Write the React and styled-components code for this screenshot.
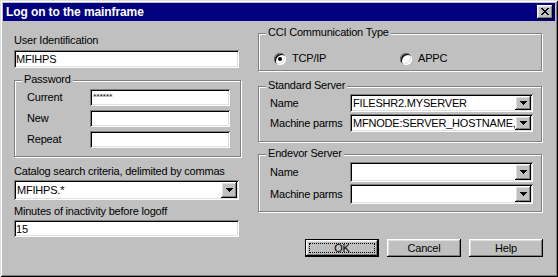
import styled, { createGlobalStyle } from 'styled-components'

const GlobalStyle = createGlobalStyle`
  html, body {
    margin: 0;
    padding: 0;
    background: #c0c0c0;
  }
  body {
    font-family: "Liberation Sans", Arial, sans-serif;
    font-size: 11px;
    letter-spacing: -0.2px;
    color: #000;
  }
  * { box-sizing: border-box; }
`

// raised and sunken bevels, win95 style
const raisedWindow = `
  box-shadow: inset 1px 1px #dfdfdf, inset -1px -1px #000,
    inset 2px 2px #fff, inset -2px -2px #808080;
`
const raisedButton = `
  box-shadow: inset -1px -1px #000, inset 1px 1px #fff,
    inset -2px -2px #808080, inset 2px 2px #dfdfdf;
`
const sunken = `
  box-shadow: inset 1px 1px #808080, inset -1px -1px #fff,
    inset 2px 2px #000, inset -2px -2px #dfdfdf;
`

const Window = styled.div`
  width: 558px;
  height: 277px;
  padding: 3px;
  background: #c0c0c0;
  ${raisedWindow}
`

const TitleBar = styled.div`
  height: 18px;
  background: #000080;
  display: flex;
  align-items: center;
  justify-content: space-between;
  padding: 0 2px 0 3px;
`

const TitleText = styled.span`
  color: #fff;
  font-weight: bold;
  font-size: 12px;
  letter-spacing: -0.1px;
  line-height: 14px;
`

const CloseButton = styled.div`
  width: 16px;
  height: 14px;
  background: #c0c0c0;
  display: flex;
  align-items: center;
  justify-content: center;
  padding: 0 1px 1px 0;
  ${raisedButton}
`

const Body = styled.div`
  display: flex;
  align-items: flex-start;
  gap: 17px;
  padding: 12px 0 0 11px;
`

const Column = styled.div`
  width: ${p => p.$w}px;
  display: flex;
  flex-direction: column;
  margin-top: ${p => p.$mt || 0}px;
`

const Label = styled.div`
  line-height: 13px;
  height: 13px;
  white-space: nowrap;
  margin-top: ${p => p.$mt || 0}px;
`

const Field = styled.div`
  width: ${p => p.$w}px;
  height: ${p => p.$h}px;
  margin-top: ${p => p.$mt || 0}px;
  background: #fff;
  display: flex;
  align-items: center;
  padding: 1px 2px 0 2px;
  line-height: 13px;
  white-space: nowrap;
  overflow: hidden;
  ${sunken}
`

const Stars = styled.span`
  font-family: "DejaVu Sans", sans-serif;
  font-size: 7px;
  line-height: 8px;
  letter-spacing: -0.3px;
  align-self: flex-start;
  margin-top: 3px;
  margin-left: 1px;
`

const Combo = styled.div`
  width: ${p => p.$w}px;
  height: ${p => p.$h}px;
  margin-top: ${p => p.$mt || 0}px;
  background: #fff;
  display: flex;
  align-items: stretch;
  padding: 2px;
  ${sunken}
`

const ComboText = styled.div`
  flex: 1;
  display: flex;
  align-items: center;
  padding: 1px 0 0 1px;
  white-space: nowrap;
  overflow: hidden;
  line-height: 13px;
`

const DropButton = styled.div`
  width: 16px;
  flex: none;
  background: #c0c0c0;
  display: flex;
  align-items: center;
  justify-content: center;
  padding-bottom: 1px;
  ${raisedButton}
`

const Group = styled.div`
  position: relative;
  width: ${p => p.$w}px;
  margin-top: ${p => p.$mt || 0}px;
  padding: ${p => p.$pad};
  border: 1px solid #808080;
  box-shadow: inset 1px 1px #fff, 1px 1px #fff;
`

const Legend = styled.span`
  position: absolute;
  top: -8px;
  left: 7px;
  padding: 0 2px;
  line-height: 13px;
  background: #c0c0c0;
  white-space: nowrap;
`

const Rows = styled.div`
  display: grid;
  grid-template-columns: ${p => p.$label}px auto;
  row-gap: ${p => p.$gap}px;
  align-items: center;
`

const RowLabel = styled.div`
  line-height: 13px;
  white-space: nowrap;
`

const RadioRow = styled.div`
  display: flex;
  align-items: center;
  height: 13px;
`

const RadioOption = styled.label`
  width: ${p => p.$w ? `${p.$w}px` : 'auto'};
  display: flex;
  align-items: center;
  gap: 6px;
  line-height: 13px;
`

const RadioCircle = styled.span`
  width: 12px;
  height: 12px;
  border-radius: 50%;
  background: #fff;
  display: flex;
  align-items: center;
  justify-content: center;
  ${sunken}

  &::after {
    content: '';
    width: 4px;
    height: 4px;
    border-radius: 50%;
    background: ${p => p.$checked ? '#000' : 'transparent'};
  }
`

const ButtonRow = styled.div`
  display: flex;
  justify-content: flex-end;
  gap: 8px;
  margin-top: 27px;
  margin-right: -1px;
`

const Button = styled.div`
  width: 74px;
  height: 18px;
  background: #c0c0c0;
  display: flex;
  align-items: stretch;
  justify-content: center;
  padding: ${p => p.$default ? '3px' : '0'};
  line-height: 13px;
  ${p => p.$default ? 'border: 1px solid #000;' : ''}
  ${raisedButton}
`

const ButtonFace = styled.span`
  flex: 1;
  display: flex;
  align-items: center;
  justify-content: center;
  padding-top: 1px;
  border: 1px dotted ${p => p.$focus ? '#000' : 'transparent'};
`

const Arrow = () => (
  <svg width="7" height="4" viewBox="0 0 7 4" shapeRendering="crispEdges">
    <path d="M0 0h7v1H0zM1 1h5v1H1zM2 2h3v1H2zM3 3h1v1H3z" fill="#000" />
  </svg>
)

const CloseIcon = () => (
  <svg width="8" height="7" viewBox="0 0 8 7" shapeRendering="crispEdges">
    <path
      d="M0 0h2v1H0zM6 0h2v1H6zM1 1h2v1H1zM5 1h2v1H5zM2 2h4v1H2zM3 3h2v1H3zM2 4h4v1H2zM1 5h2v1H1zM5 5h2v1H5zM0 6h2v1H0zM6 6h2v1H6z"
      fill="#000"
    />
  </svg>
)

function ComboBox({ w, h, mt, value }) {
  return (
    <Combo $w={w} $h={h} $mt={mt}>
      <ComboText>{value}</ComboText>
      <DropButton><Arrow /></DropButton>
    </Combo>
  )
}

export default function App() {
  return (
    <>
      <GlobalStyle />
      <Window>
        <TitleBar>
          <TitleText>Log on to the mainframe</TitleText>
          <CloseButton><CloseIcon /></CloseButton>
        </TitleBar>
        <Body>
          <Column $w={227} $mt={1}>
            <Label>User Identification</Label>
            <Field $w={225} $h={18} $mt={3}>MFIHPS</Field>

            <Group $w={227} $mt={12} $pad="8px 0 8px 12px">
              <Legend>Password</Legend>
              <Rows $label={63} $gap={4}>
                <RowLabel>Current</RowLabel>
                <Field $w={140} $h={17}><Stars>******</Stars></Field>
                <RowLabel>New</RowLabel>
                <Field $w={140} $h={17} />
                <RowLabel>Repeat</RowLabel>
                <Field $w={140} $h={17} />
              </Rows>
            </Group>

            <Label $mt={8}>Catalog search criteria, delimited by commas</Label>
            <ComboBox w={225} h={20} mt={2} value="MFIHPS.*" />
            <Label $mt={5}>Minutes of inactivity before logoff</Label>
            <Field $w={225} $h={17} $mt={2}>15</Field>
          </Column>

          <Column $w={284}>
            <Group $w={284} $pad="18px 0 5px 15px">
              <Legend>CCI Communication Type</Legend>
              <RadioRow>
                <RadioOption $w={126}>
                  <RadioCircle $checked />
                  TCP/IP
                </RadioOption>
                <RadioOption>
                  <RadioCircle />
                  APPC
                </RadioOption>
              </RadioRow>
            </Group>

            <Group $w={284} $mt={15} $pad="7px 0 9px 11px">
              <Legend>Standard Server</Legend>
              <Rows $label={80} $gap={2}>
                <RowLabel>Name</RowLabel>
                <ComboBox w={183} h={18} value="FILESHR2.MYSERVER" />
                <RowLabel>Machine parms</RowLabel>
                <ComboBox w={183} h={18} value="MFNODE:SERVER_HOSTNAME," />
              </Rows>
            </Group>

            <Group $w={284} $mt={12} $pad="7px 0 7px 11px">
              <Legend>Endevor Server</Legend>
              <Rows $label={80} $gap={2}>
                <RowLabel>Name</RowLabel>
                <ComboBox w={183} h={20} value="" />
                <RowLabel>Machine parms</RowLabel>
                <ComboBox w={183} h={20} value="" />
              </Rows>
            </Group>

            <ButtonRow>
              <Button $default><ButtonFace $focus>OK</ButtonFace></Button>
              <Button><ButtonFace>Cancel</ButtonFace></Button>
              <Button><ButtonFace>Help</ButtonFace></Button>
            </ButtonRow>
          </Column>
        </Body>
      </Window>
    </>
  )
}
